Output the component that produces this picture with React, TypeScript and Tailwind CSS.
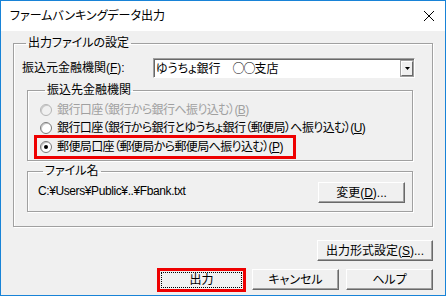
import React from "react";

const btn =
  "flex items-center justify-center h-[21px] bg-[#f0f0f0] border border-t-white border-l-white border-r-[#696969] border-b-[#696969] shadow-[inset_-1px_-1px_0_#a0a0a0] text-black";

const groupBox =
  "border border-[#a0a0a0] shadow-[inset_1px_1px_0_#fff,1px_1px_0_#fff] m-0";

function Radio({ checked, disabled }: { checked?: boolean; disabled?: boolean }) {
  return (
    <span
      className={`flex items-center justify-center w-[12px] h-[12px] rounded-full border shadow-[inset_1px_1px_0_#c8c8c8] ${
        disabled ? "border-[#b5b5b5] bg-[#f0f0f0]" : "border-[#7a7a7a] bg-white"
      }`}
    >
      {checked && <span className="w-[4px] h-[4px] rounded-full bg-black" />}
    </span>
  );
}

function RadioRow({
  label,
  accel,
  checked,
  disabled,
}: {
  label: string;
  accel: string;
  checked?: boolean;
  disabled?: boolean;
}) {
  return (
    <div className={`flex items-center h-[18px] ${disabled ? "text-[#a0a0a0]" : "text-black"}`}>
      <Radio checked={checked} disabled={disabled} />
      <span className="ml-[5px] whitespace-nowrap tracking-[-0.6px]">
        {label}(<u>{accel}</u>)
      </span>
    </div>
  );
}

export default function App() {
  return (
    <div className="w-[446px] h-[296px] flex flex-col border border-[#1883d7] bg-[#f0f0f0] text-[12px] leading-[14px] text-black font-['Liberation_Sans','Noto_Sans_CJK_JP',sans-serif] [font-feature-settings:'palt']">
      {/* title bar */}
      <div className="h-[30px] bg-white flex items-center justify-between pl-[9px] pr-[9px]">
        <span className="text-[12px]">ファームバンキングデータ出力</span>
        <svg width="12" height="12" viewBox="0 0 12 12" className="mr-[1px]">
          <path d="M1 1 L11 11 M11 1 L1 11" stroke="#000" strokeWidth="1" />
        </svg>
      </div>

      {/* body */}
      <div className="flex-1 flex flex-col px-[12px] pt-[5px]">
        <fieldset className={`${groupBox} pl-[8px] pr-[19px] pb-[14px]`}>
          <legend className="ml-[4px] px-[2px] leading-[14px]">出力ファイルの設定</legend>

          <div className="flex items-center h-[20px] mt-[8px]">
            <span className="w-[131px] whitespace-nowrap">
              振込元金融機関(<u>F</u>):
            </span>
            <div className="flex-1 -mr-[2px] h-[20px] flex items-center bg-white border border-t-[#a0a0a0] border-l-[#a0a0a0] border-r-white border-b-white shadow-[inset_1px_1px_0_#696969]">
              <span className="flex-1 pl-[2px] whitespace-nowrap">
                ゆうちょ銀行　<span className="font-['Noto_Sans_CJK_JP',sans-serif] tracking-[-1px]">○○</span>支店
              </span>
              <span className="w-[12px] h-[15px] mr-[1px] flex items-center justify-center bg-[#f0f0f0] border border-t-white border-l-white border-r-[#696969] border-b-[#696969] outline outline-1 outline-[#a0a0a0]">
                <svg width="5" height="3" viewBox="0 0 5 3">
                  <path d="M0 0 H5 L2.5 3 Z" fill="#000" />
                </svg>
              </span>
            </div>
          </div>

          {/* destination */}
          <fieldset className={`${groupBox} ml-[5px] mt-[5px] pl-[12px] pr-[8px] pb-[1px]`}>
            <legend className="ml-[5px] px-[2px] leading-[14px]">振込先金融機関</legend>
            <div className="mt-[4px] flex flex-col">
              <RadioRow disabled label="銀行口座（銀行から銀行へ振り込む）" accel="B" />
              <RadioRow label="銀行口座（銀行から銀行とゆうちょ銀行（郵便局）へ振り込む）" accel="U" />
              <div className="-ml-[6px] -mt-[2px] w-[262px] h-[24px] pl-[3px] flex items-center border-[3px] border-[#ee0000]">
                <RadioRow checked label="郵便局口座（郵便局から郵便局へ振り込む）" accel="P" />
              </div>
            </div>
          </fieldset>

          {/* file name */}
          <fieldset className={`${groupBox} ml-[5px] mt-[3px] pl-[10px] pr-[7px] pb-[8px]`}>
            <legend className="ml-[5px] px-[2px] leading-[14px]">ファイル名</legend>
            <div className="mt-[4px] flex items-center justify-between">
              <span className="-mt-[3px] whitespace-nowrap tracking-[-0.4px]">C:¥Users¥Public¥..¥Fbank.txt</span>
              <button className={`${btn} w-[87px]`}>
                変更(<u>D</u>)...
              </button>
            </div>
          </fieldset>
        </fieldset>

        <div className="flex justify-end mt-[13px]">
          <button className={`${btn} w-[116px]`}>
            出力形式設定(<u>S</u>)...
          </button>
        </div>

        <div className="flex justify-end items-start gap-[7px] mt-[7px]">
          <div className="w-[89px] h-[24px] border-[3px] border-[#ee0000] -mr-[1px] flex">
            <button className="flex-1 flex items-center justify-center bg-[#f0f0f0]">
              <span className="flex-1 mx-[1px] h-[16px] flex items-center justify-center border border-dotted border-black">
                出力
              </span>
            </button>
          </div>
          <button className={`${btn} w-[87px] h-[20px] mt-[1px]`}>キャンセル</button>
          <button className={`${btn} w-[87px] h-[20px] mt-[1px]`}>ヘルプ</button>
        </div>
      </div>
    </div>
  );
}
